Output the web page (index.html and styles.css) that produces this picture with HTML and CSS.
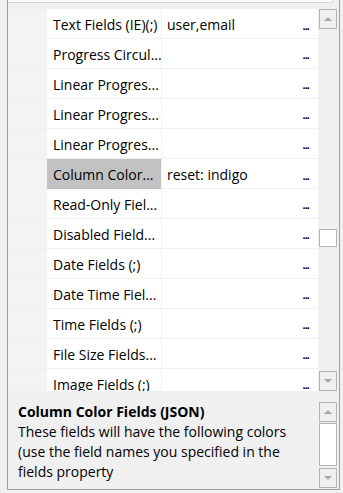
FILE: index.html
```html
<!DOCTYPE html>
<html lang="en">
<head>
    <meta charset="UTF-8">
    <meta name="viewport" content="width=device-width, initial-scale=1.0">
    <title>Property Grid</title>
    <link rel="stylesheet" href="styles.css">
</head>
<body>
    <div class="frame">
        <div class="toolbar"></div>

        <div class="grid">
            <div class="rows">
                <div class="row">
                    <div class="gutter"></div>
                    <div class="name">Text Fields (IE)(;)</div>
                    <div class="value"><span>user,email</span><span class="more">...</span></div>
                </div>
                <div class="row">
                    <div class="gutter"></div>
                    <div class="name">Progress Circul...</div>
                    <div class="value"><span></span><span class="more">...</span></div>
                </div>
                <div class="row">
                    <div class="gutter"></div>
                    <div class="name">Linear Progres...</div>
                    <div class="value"><span></span><span class="more">...</span></div>
                </div>
                <div class="row">
                    <div class="gutter"></div>
                    <div class="name">Linear Progres...</div>
                    <div class="value"><span></span><span class="more">...</span></div>
                </div>
                <div class="row">
                    <div class="gutter"></div>
                    <div class="name">Linear Progres...</div>
                    <div class="value"><span></span><span class="more">...</span></div>
                </div>
                <div class="row selected">
                    <div class="gutter"></div>
                    <div class="name">Column Color...</div>
                    <div class="value"><span>reset: indigo</span><span class="more">...</span></div>
                </div>
                <div class="row">
                    <div class="gutter"></div>
                    <div class="name">Read-Only Fiel...</div>
                    <div class="value"><span></span><span class="more">...</span></div>
                </div>
                <div class="row">
                    <div class="gutter"></div>
                    <div class="name">Disabled Field...</div>
                    <div class="value"><span></span><span class="more">...</span></div>
                </div>
                <div class="row">
                    <div class="gutter"></div>
                    <div class="name">Date Fields (;)</div>
                    <div class="value"><span></span><span class="more">...</span></div>
                </div>
                <div class="row">
                    <div class="gutter"></div>
                    <div class="name">Date Time Fiel...</div>
                    <div class="value"><span></span><span class="more">...</span></div>
                </div>
                <div class="row">
                    <div class="gutter"></div>
                    <div class="name">Time Fields (;)</div>
                    <div class="value"><span></span><span class="more">...</span></div>
                </div>
                <div class="row">
                    <div class="gutter"></div>
                    <div class="name">File Size Fields...</div>
                    <div class="value"><span></span><span class="more">...</span></div>
                </div>
                <div class="row">
                    <div class="gutter"></div>
                    <div class="name">Image Fields (;)</div>
                    <div class="value"><span></span><span class="more">...</span></div>
                </div>
            </div>

            <div class="vscroll">
                <div class="sb-btn"><span class="tri up"></span></div>
                <div class="track">
                    <div class="thumb grid-thumb"></div>
                </div>
                <div class="sb-btn"><span class="tri down"></span></div>
            </div>
        </div>

        <div class="desc">
            <div class="desc-text">
                <div class="desc-title">Column Color Fields (JSON)</div>
                <div>These fields will have the following colors<br>(use the field names you specified in the<br>fields property</div>
            </div>
            <div class="vscroll small">
                <div class="sb-btn"><span class="tri up"></span></div>
                <div class="track">
                    <div class="thumb desc-thumb"></div>
                </div>
                <div class="sb-btn"><span class="tri down"></span></div>
            </div>
        </div>
    </div>
</body>
</html>
```

FILE: styles.css
```css
body {
    margin: 0;
    background: #f0f0f0;
    font-family: 'Segoe UI', 'Open Sans', sans-serif;
    font-size: 14px;
    color: #000;
}

.frame {
    margin-left: 7px;
    width: 331px;
    height: 489px;
    border-left: 1px solid #a0a0a0;
    border-right: 1px solid #a0a0a0;
    border-bottom: 1px solid #a0a0a0;
    display: flex;
    flex-direction: column;
}

.toolbar {
    height: 2px;
    width: 324px;
    background: #fff;
    border-bottom: 1px solid #d5d5d5;
    border-right: 1px solid #d5d5d5;
    margin-bottom: 6px;
}

.grid {
    display: flex;
    height: 382px;
}

.rows {
    width: 310px;
    overflow: hidden;
    background: #fff;
}

.row {
    display: grid;
    grid-template-columns: 39px 115px 1fr;
    height: 29px;
    border-bottom: 1px solid #f0f0f0;
}

.gutter {
    background: #f3f3f3;
}

.name {
    padding: 3px 0 0 6px;
    line-height: 26px;
    white-space: nowrap;
    overflow: hidden;
    border-right: 1px solid #f0f0f0;
}

.selected .name {
    background: #c2c2c2;
}

.value {
    display: flex;
    justify-content: space-between;
    align-items: baseline;
    padding: 3px 9px 0 5px;
    line-height: 26px;
}

.more {
    font-size: 11px;
    font-weight: bold;
    letter-spacing: -1px;
}

.vscroll {
    width: 21px;
    display: flex;
    flex-direction: column;
    padding: 0 2px 0 1px;
    box-sizing: border-box;
    background: #f0f0f0;
}

.sb-btn {
    height: 18px;
    border: 1px solid #b4b4b4;
    background: #f0f0f0;
    display: flex;
    align-items: center;
    justify-content: center;
}

.track {
    flex: 1;
    position: relative;
}

.thumb {
    position: absolute;
    left: 0;
    right: 0;
    background: #fff;
    border: 1px solid #b4b4b4;
}

.grid-thumb {
    top: 200px;
    height: 16px;
}

.desc-thumb {
    top: 1px;
    height: 41px;
}

.tri {
    width: 0;
    height: 0;
    border-left: 4px solid transparent;
    border-right: 4px solid transparent;
}

.tri.up {
    border-bottom: 4px solid #a6a6a6;
}

.tri.down {
    border-top: 4px solid #a6a6a6;
}

.desc {
    flex: 1;
    display: flex;
    padding-top: 11px;
}

.desc-text {
    flex: 1;
    padding-left: 10px;
    line-height: 20px;
    white-space: nowrap;
}

.desc-title {
    font-weight: bold;
}

.vscroll.small {
    height: 86px;
}
```
